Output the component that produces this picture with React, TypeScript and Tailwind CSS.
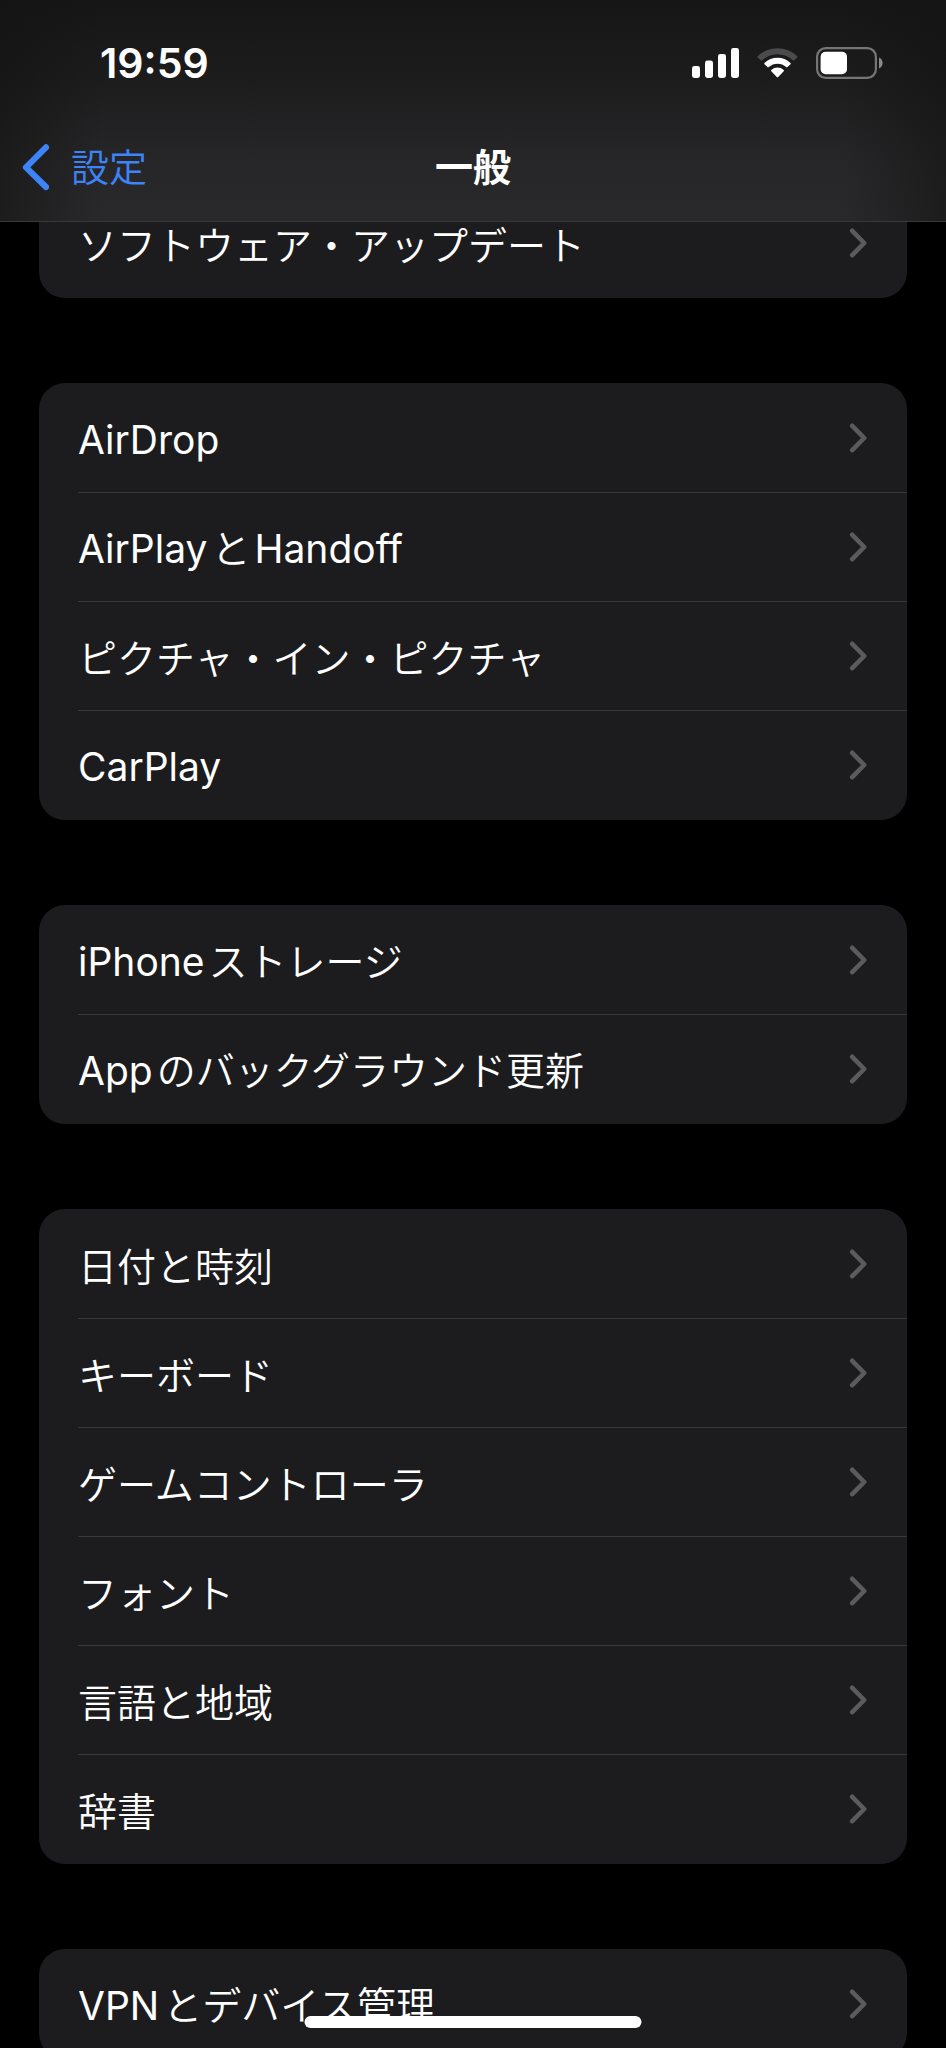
import React from "react";

const groups: string[][] = [
  ["ソフトウェア・アップデート"],
  ["AirDrop", "AirPlayとHandoff", "ピクチャ・イン・ピクチャ", "CarPlay"],
  ["iPhoneストレージ", "Appのバックグラウンド更新"],
  ["日付と時刻", "キーボード", "ゲームコントローラ", "フォント", "言語と地域", "辞書"],
  ["VPNとデバイス管理"],
];

/* Latin runs are set in Inter with a little air next to Japanese characters. */
function Label({ text }: { text: string }) {
  const parts = text.split(/([A-Za-z]+)/).filter(Boolean);
  return (
    <span className="text-[39px] leading-[40px] font-[350] whitespace-nowrap">
      {parts.map((part, i) =>
        /^[A-Za-z]/.test(part) ? (
          <span key={i} className="mx-1 font-['Inter',sans-serif] font-normal first:ml-0">
            {part}
          </span>
        ) : (
          <React.Fragment key={i}>{part}</React.Fragment>
        ),
      )}
    </span>
  );
}

function Row({ text, first }: { text: string; first: boolean }) {
  return (
    <li>
      <a href="#" className="flex h-[109px] pl-[39px]">
        <span
          className={
            first
              ? "flex flex-1 items-center justify-between border-t border-transparent pr-10"
              : "flex flex-1 items-center justify-between border-t border-[#38383a] pr-10"
          }
        >
          <Label text={text} />
          <svg width="18" height="30" viewBox="0 0 18 30" fill="none" aria-hidden="true">
            <path
              d="M3.2 2.8 15.2 15 3.2 27.2"
              stroke="#5b5b5f"
              strokeWidth="4.6"
              strokeLinecap="round"
              strokeLinejoin="round"
            />
          </svg>
        </span>
      </a>
    </li>
  );
}

function StatusIcons() {
  return (
    <div className="flex items-center gap-[18px]">
      <svg width="47" height="32" viewBox="0 0 47 32" fill="#fff" aria-hidden="true">
        <rect x="0" y="19" width="8" height="12" rx="2.4" />
        <rect x="13" y="13.5" width="8" height="17.5" rx="2.4" />
        <rect x="26" y="7" width="8" height="24" rx="2.4" />
        <rect x="39" y="1" width="8" height="30" rx="2.4" />
      </svg>
      <svg width="41" height="32" viewBox="0 0 41 32" aria-hidden="true">
        <path
          d="M0.8 9.2A28.2 28.2 0 0 1 40.2 9.2Q40.8 9.9 40.2 10.5L37.3 13.3Q36.6 13.9 35.9 13.3A22.3 22.3 0 0 0 5.1 13.3Q4.4 13.9 3.7 13.3L0.8 10.5Q0.2 9.9 0.8 9.2Z"
          fill="#4b4b4d"
        />
        <path
          d="M7.5 15.9A18.8 18.8 0 0 1 33.5 15.9Q34.1 16.6 33.5 17.2L30.5 20.1Q29.9 20.6 29.2 20.1A13 13 0 0 0 11.8 20.1Q11.1 20.6 10.5 20.1L7.5 17.2Q6.9 16.6 7.5 15.9Z"
          fill="#fff"
        />
        <path
          d="M14.3 22.9A9.4 9.4 0 0 1 26.7 22.9Q27.4 23.6 26.7 24.3L21.2 30.1Q20.5 30.8 19.8 30.1L14.3 24.3Q13.6 23.6 14.3 22.9Z"
          fill="#fff"
        />
      </svg>
      <svg width="67" height="32" viewBox="0 0 67 32" aria-hidden="true">
        <rect x="1.1" y="1.1" width="58.8" height="29.8" rx="8.6" fill="none" stroke="#767678" strokeWidth="2.2" />
        <rect x="4.6" y="4.8" width="26.4" height="22.4" rx="5" fill="#fff" />
        <path d="M63 10.6Q66.6 12.4 66.6 16T63 21.4Z" fill="#8a8a8c" />
      </svg>
    </div>
  );
}

export default function App() {
  return (
    <div
      lang="ja"
      className="relative flex h-screen flex-col overflow-hidden bg-black font-['Noto_Sans_CJK_JP',sans-serif] text-white"
    >
      <header className="relative z-10 flex-none border-b border-[#38383a] bg-[linear-gradient(to_right,rgba(18,18,18,0.55),transparent_11%,transparent_89%,rgba(18,18,18,0.55)),linear-gradient(to_bottom,#161616,#1c1c1d_35%,#272729_75%,#29292b)] pb-[13px]">
        <div className="flex h-[126px] items-center justify-between pr-[63px] pl-[100px]">
          <time className="font-['Inter',sans-serif] text-[41px] leading-none font-semibold">19:59</time>
          <StatusIcons />
        </div>
        <div className="grid h-[82px] grid-cols-[1fr_auto_1fr] items-center">
          <a href="#" className="flex items-center gap-[22px] pl-[21px] text-[#3d84f7]">
            <svg width="28" height="48" viewBox="0 0 28 48" fill="none" aria-hidden="true">
              <path
                d="M25 4.4 5 24.4 25 44"
                stroke="currentColor"
                strokeWidth="6.2"
                strokeLinecap="round"
                strokeLinejoin="round"
              />
            </svg>
            <span className="pb-1 text-[38px] leading-[52px] font-[350]">設定</span>
          </a>
          <h1 className="pb-1 text-[38px] leading-[52px] font-bold">一般</h1>
        </div>
      </header>

      <main className="min-h-0 flex-1 overflow-hidden px-[39px]">
        <div className="-mt-[34px] flex flex-col gap-[85px]">
          {groups.map((rows) => (
            <ul key={rows[0]} className="rounded-[26px] bg-[#1c1c1e] pb-px">
              {rows.map((text, i) => (
                <Row key={text} text={text} first={i === 0} />
              ))}
            </ul>
          ))}
        </div>
      </main>

      <div className="absolute bottom-5 left-1/2 z-20 h-3 w-[337px] -translate-x-1/2 rounded-full bg-white" />
    </div>
  );
}
